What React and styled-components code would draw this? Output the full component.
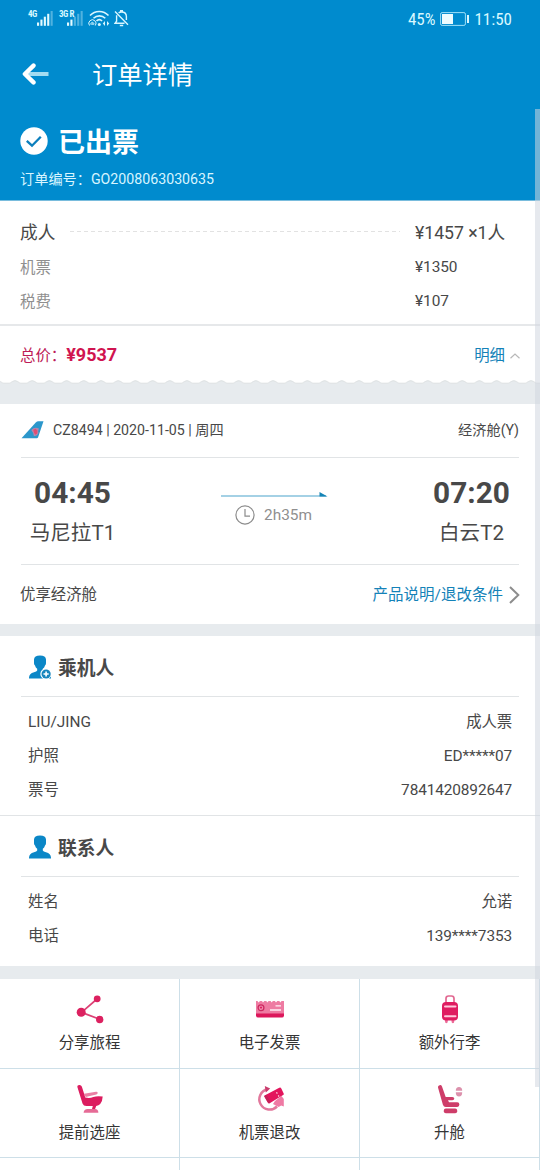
import React from 'react'
import styled, { createGlobalStyle } from 'styled-components'

const fare = [
    { label: '机票', value: '¥1350' },
    { label: '税费', value: '¥107' },
]

const passenger = [
    { label: 'LIU/JING', value: '成人票' },
    { label: '护照', value: 'ED*****07' },
    { label: '票号', value: '7841420892647' },
]

const contact = [
    { label: '姓名', value: '允诺' },
    { label: '电话', value: '139****7353' },
]

const SignalIcon = ({ bars }) => (
    <svg width="17" height="15" viewBox="0 0 17 15">
        {[0, 1, 2, 3, 4].map((i) => (
            <rect key={i} x={i * 3.4} y={11.5 - i * 2.9} width="2.1" height={3.3 + i * 2.9} fill="#e4fbff" opacity={i < bars ? 1 : 0.35} />
        ))}
    </svg>
)

const WifiIcon = () => (
    <svg width="22" height="17" viewBox="0 0 22 17" fill="none" stroke="#d8f6ff" strokeWidth="1.6">
        <path d="M2 5.5C7 .1 15.5.1 20.5 5.5" />
        <path d="M5.5 8.3C8.8 5 14 5 17.3 8.3" />
        <path d="M8.5 11c1.6-1.6 4-1.6 5.6 0" />
        <path d="M1.5 15.5a3.6 3.6 0 1 1 5.8 0" strokeWidth="1" />
        <path d="M3.2 14.8a1.5 1.5 0 1 1 2.4 0" strokeWidth="1" />
        <circle cx="4.4" cy="14" r=".8" fill="#d8f6ff" stroke="none" />
        <circle cx="11.3" cy="14.4" r="1.5" fill="#d8f6ff" stroke="none" />
        <path d="M17 11v5l-2.2-2.5zM19 11v5l2.2-2.5z" fill="#d8f6ff" stroke="none" />
    </svg>
)

const BellOffIcon = () => (
    <svg width="15" height="17" viewBox="0 0 15 17" fill="none" stroke="#d8f6ff" strokeWidth="1.4">
        <path d="M1 1.5l13 13.2M2.6 5.3v5.9L1 13.3h9.5M4.6 2.9C5.5 2.2 6.2 2 7.5 2c3 0 4.9 2 4.9 4.6V10" />
        <path d="M6.7 2V.6h1.6V2M5.8 15.5h3.4" />
    </svg>
)

const BatteryIcon = () => (
    <svg width="29" height="14" viewBox="0 0 29 14">
        <rect x=".6" y=".6" width="24.8" height="12.8" rx="1.5" fill="none" stroke="#9fe0f8" strokeWidth="1" />
        <rect x="2" y="2" width="11" height="10" fill="#edfcff" />
        <rect x="27" y="3" width="2" height="8" fill="#d8f6ff" />
    </svg>
)

const BackIcon = () => (
    <svg width="27" height="22" viewBox="0 0 27 22" fill="none">
        <path d="M5 11h21.5" stroke="#a3dcf1" strokeWidth="4" />
        <path d="M11.5 2.6L2.9 11l8.6 8.4" stroke="#fff" strokeWidth="4.4" strokeLinecap="round" strokeLinejoin="round" />
    </svg>
)

const CheckIcon = () => (
    <svg width="28" height="28" viewBox="0 0 28 28">
        <circle cx="14" cy="14" r="13.7" fill="#fff" />
        <path d="M6.8 13.8l5.2 4.9 8.8-9" fill="none" stroke="#0c7fbd" strokeWidth="2.3" />
    </svg>
)

const TailIcon = () => (
    <svg width="23" height="18" viewBox="0 0 23 18">
        <path d="M.5 17.2L14.8 1.5Q15.9.3 17.5.3h5L17 16.5q-.3.7-1.2.7z" fill="#2c97cb" />
        <path d="M10.3 9q3.3-3.6 7.6-1.4-1 2.1-.4 4.4-1.3 3.5-4.6 3-.3-3.1-2.6-6z" fill="#b585ad" />
        <path d="M12.2 8.7l2.2-1 2 1.7-.2 3.2-2.1 1.2-1.2-2.5z" fill="#e04d72" />
    </svg>
)

const RouteArrow = () => (
    <svg width="108" height="7" viewBox="0 0 108 7">
        <path d="M0 5h105" stroke="#4aa4cb" strokeWidth="1.1" />
        <path d="M98.5 1l8 4.5h-8z" fill="#1584b6" />
    </svg>
)

const ClockIcon = () => (
    <svg width="20" height="20" viewBox="0 0 20 20" fill="none" stroke="#8c8c8c" strokeWidth="1.2">
        <circle cx="10" cy="10" r="9.1" />
        <path d="M10 4v7.2h5" />
    </svg>
)

const ChevronUp = () => (
    <svg width="10" height="6" viewBox="0 0 10 6" fill="none" stroke="#b8b8b8" strokeWidth="1.2">
        <path d="M.5 5.2L5 1l4.5 4.2" />
    </svg>
)

const ChevronRight = () => (
    <svg width="11" height="18" viewBox="0 0 11 18" fill="none" stroke="#8d8d8d" strokeWidth="2">
        <path d="M1 1l8.3 8L1 17" />
    </svg>
)

const PersonIcon = ({ plus }) => (
    <svg width="22" height="24" viewBox="0 0 22 24">
        <path d="M5 4.4Q5.2.5 11 .5t6 3.9v3q.3 2-1 3-.6 2.2-2.2 3.3v1.9q.5 1 3.2 1.7 4.8 1.2 5 5.4v.9H0v-.9q.2-4.2 5-5.4 2.7-.7 3.2-1.7v-1.9Q6.6 12.600 6 10.400q-1.300-1-1-3z" fill="#0b87c7" />
        {plus && (
            <>
                <circle cx="16.9" cy="18.9" r="5.6" fill="#fff" />
                <circle cx="17.1" cy="19" r="4.6" fill="#1685bd" />
                <path d="M17.1 16.4v5.200M14.500 19h5.200" stroke="#fff" strokeWidth="1.6" />
            </>
        )}
    </svg>
)

const ShareIcon = () => (
    <svg width="30" height="30" viewBox="0 0 30 30" fill="#dc2160">
        <path d="M22 5L6.5 18.4 24 25" fill="none" stroke="#dc4275" strokeWidth="1.7" />
        <circle cx="22.2" cy="4.8" r="3.4" />
        <circle cx="6.2" cy="18.3" r="4.5" />
        <circle cx="24.7" cy="25.5" r="3.7" />
    </svg>
)

const InvoiceIcon = () => (
    <svg width="30" height="30" viewBox="0 0 30 30">
        <path d="M1 7h1.5l1 1.4L5 7h2l1 1.4L9.3 7h2l1 1.4L13.6 7h2l1 1.4L17.900 7h2L21 8.4 22.3 7h2l1 1.4L26.6 7H29v14H1z" fill="#ee7ba2" />
        <path d="M1 19.5h28v1.8q0 2.2-2 2.2H3q-2 0-2-2.2z" fill="#dc175b" />
        <circle cx="6" cy="13.800" r="2.9" fill="#f08eae" stroke="#cc285f" strokeWidth="1.3" />
        <path d="M4.6 12.700h2.8L6 15.200z" fill="#dc175b" />
        <path d="M20.500 11.9H26M15 16h11" stroke="#fff0f5" strokeWidth="1.3" />
    </svg>
)

const LuggageIcon = () => (
    <svg width="30" height="30" viewBox="0 0 30 30">
        <path d="M11 9V4.5Q11 2 13.5 2h3Q19 2 19 4.5V9" fill="none" stroke="#e26891" strokeWidth="1.7" />
        <path d="M10 26h2.800v1.200q0 2-1.400 2t-1.400-2zM16.500 26h2.800v1.200q0 2-1.400 2t-1.400-2z" fill="#ec6c99" />
        <rect x="7" y="8" width="16" height="18.5" rx="4" fill="#df1c60" />
        <path d="M10 12.5h10.5M10 22.3h10.5" stroke="#ffc9dc" strokeWidth="2" strokeLinecap="round" />
    </svg>
)

const SeatIcon = () => (
    <svg width="30" height="30" viewBox="0 0 30 30">
        <path d="M9 9.800l12-2q1.5-.2 1.7 1t-1.4 1.6L10.700 13z" fill="#ea7fa4" />
        <path d="M2.300 2.800Q2.200 1 4.200 1 6.200.8 6.900 2.800L10.300 13.600q4.500.9 8-.5 3.800-1.400 9.400-.500-.1 4.300-2.500 7.400-1.500 1.700-4 1.900l-1.300 3.600h-3l.9-3.600h-6.400q-2.900 0-3.900-2.500z" fill="#dc1c5f" />
        <path d="M8.600 28.800q.4-3.700 4-3.700h7.600q3 .1 3.200 3.700z" fill="#e66b96" />
    </svg>
)

const RefundIcon = () => (
    <svg width="30" height="30" viewBox="0 0 30 30">
        <path d="M20 17l6.500-5 2.300 3v7.500l-2.600-1-2.600 1.600L18 20z" fill="#ef7aa4" />
        <path d="M12.500 5.200A10.300 10.300 0 1 0 22 22.500" fill="none" stroke="#e2789c" strokeWidth="2.5" />
        <path d="M9.800 2l5.400 2.600-4.400 4z" fill="#c93d6d" />
        <path d="M9.600 11.500L24.300 3.800q1.300-.6 2 .7l2.400 4.900q.5 1-.6 1.700L14.700 19.300q-1.300.6-2-.7l-3.400-5.800q-.4-.9.300-1.300z" fill="#e3155d" />
        <path d="M21.500 8.300l.8 1.300M23.300 11.400l.7 1.200" stroke="#ffd2e1" strokeWidth="1.2" />
        <path d="M9.300 12l2.200-1.200 4 7.200-2.200 1z" fill="#c32258" />
    </svg>
)

const UpgradeIcon = () => (
    <svg width="30" height="30" viewBox="0 0 30 30">
        <path d="M3 3.600q-.3-2 1.6-2.400 1.7-.4 2.4 1.300L10.700 13h6.600q2 0 2 1.600t-2 1.700H13l1 2h8.200q2.200.1 2.200 2.200t-2.200 2.500H10.700q-2 0-2.800-2.200z" fill="#ce3d69" />
        <rect x="8.800" y="24.600" width="13.400" height="4.600" rx="2" fill="#ce3d69" />
        <path d="M20.800 6.800q0-3.700 3.200-3.700t3.200 3.700z" fill="#dc91ac" />
        <path d="M20.800 8.200h6.400q0 4.300-3.200 4.300t-3.200-4.300z" fill="#dc91ac" />
    </svg>
)

const services = [
    { name: '分享旅程', Icon: ShareIcon },
    { name: '电子发票', Icon: InvoiceIcon },
    { name: '额外行李', Icon: LuggageIcon },
    { name: '提前选座', Icon: SeatIcon },
    { name: '机票退改', Icon: RefundIcon },
    { name: '升舱', Icon: UpgradeIcon },
]

const InfoList = ({ items }) => (
    <List>
        {items.map((item) => (
            <InfoRow key={item.label}>
                <span>{item.label}</span>
                <InfoValue>{item.value}</InfoValue>
            </InfoRow>
        ))}
    </List>
)

export default function App() {
    return (
        <Page>
            <GlobalStyle />
            <Header>
                <StatusBar>
                    <StatusLeft>
                        <Network>4G</Network>
                        <SignalIcon bars={4} />
                        <Network $second>3G R</Network>
                        <SignalIcon bars={2} />
                        <WifiIcon />
                        <BellOffIcon />
                    </StatusLeft>
                    <StatusRight>
                        <span>45%</span>
                        <BatteryIcon />
                        <span>11:50</span>
                    </StatusRight>
                </StatusBar>
                <TitleBar>
                    <BackIcon />
                    <Title>订单详情</Title>
                </TitleBar>
                <State>
                    <CheckIcon />
                    <StateText>已出票</StateText>
                </State>
                <OrderNo>订单编号：GO2008063030635</OrderNo>
            </Header>

            <PriceCard>
                <FareRow $main>
                    <FareHead>成人</FareHead>
                    <Dashes />
                    <FareValue>¥1457 ×1人</FareValue>
                </FareRow>
                {fare.map((item) => (
                    <FareRow key={item.label}>
                        <FareLabel>{item.label}</FareLabel>
                        <FareValue>{item.value}</FareValue>
                    </FareRow>
                ))}
            </PriceCard>
            <TotalRow>
                <TotalLabel>总价：<Amount>¥9537</Amount></TotalLabel>
                <Detail>明细<ChevronUp /></Detail>
            </TotalRow>
            <Gap $height={24}>
                <svg width="540" height="4" viewBox="0 0 540 4">
                    <defs>
                        <pattern id="scallop" x="6.4" width="17.2" height="4" patternUnits="userSpaceOnUse">
                            <path d="M0 3.200h3Q4.600 2.900 5.800 1.600q2.800-2 5.600 0 1.200 1.300 2.800 1.600h3V4H0z" fill="#e7ebee" />
                            <path d="M0 3.200h3Q4.600 2.900 5.800 1.600q2.800-2 5.600 0 1.200 1.300 2.800 1.600h3" fill="none" stroke="#dcdfe1" strokeWidth=".9" />
                        </pattern>
                    </defs>
                    <rect width="540" height="4" fill="#fff" />
                    <rect width="540" height="4" fill="url(#scallop)" />
                </svg>
            </Gap>

            <Flight>
                <FlightHead>
                    <TailIcon />
                    <FlightNo>CZ8494 | 2020-11-05 | 周四</FlightNo>
                    <span>经济舱(Y)</span>
                </FlightHead>
                <Journey>
                    <Stop>
                        <Time>04:45</Time>
                        <Airport>马尼拉T1</Airport>
                    </Stop>
                    <Route>
                        <RouteArrow />
                        <Duration><ClockIcon />2h35m</Duration>
                    </Route>
                    <Stop>
                        <Time>07:20</Time>
                        <Airport>白云T2</Airport>
                    </Stop>
                </Journey>
                <Product>
                    <span>优享经济舱</span>
                    <Rules>产品说明/退改条件<ChevronRight /></Rules>
                </Product>
            </Flight>
            <Gap $height={12} />

            <Section $divided>
                <SectionTitle><PersonIcon plus />乘机人</SectionTitle>
                <InfoList items={passenger} />
            </Section>
            <Section>
                <SectionTitle><PersonIcon />联系人</SectionTitle>
                <InfoList items={contact} />
            </Section>
            <Gap $height={13} />

            <Services>
                {services.map(({ name, Icon }) => (
                    <Service key={name}>
                        <Icon />
                        <span>{name}</span>
                    </Service>
                ))}
                <Service />
                <Service />
                <Service />
            </Services>
            <Scrollbar />
        </Page>
    )
}

const GlobalStyle = createGlobalStyle`
    * {
        box-sizing: border-box;
    }
    body {
        margin: 0;
        overflow: hidden;
    }
    svg {
        display: block;
        flex-shrink: 0;
    }
`;
const Page = styled.div`
    position: relative;
    width: 540px;
    height: 1170px;
    overflow: hidden;
    background: #fff;
    color: #484848;
    font-family: Roboto, "Noto Sans CJK SC", sans-serif;
    font-size: 15.4px;
    line-height: 20px;
`;
const Header = styled.header`
    height: 201px;
    background: #008bce;
    border-bottom: 1px solid #79bcdd;
    color: #fff;
`;
const StatusBar = styled.div`
    display: flex;
    justify-content: space-between;
    height: 38px;
    padding: 9px 28px 0;
    color: #d8f8ff;
`;
const StatusLeft = styled.div`
    display: flex;
    align-items: center;
    height: 18px;
    svg:nth-of-type(n + 3) {
        margin-left: 4px;
    }
`;
const Network = styled.span`
    align-self: flex-start;
    width: ${props => props.$second ? '8px' : '9px'};
    margin-left: ${props => props.$second ? '5px' : '0'};
    font-family: "Roboto Condensed", Roboto, sans-serif;
    font-size: 9px;
    font-weight: 700;
    line-height: 11px;
    letter-spacing: -0.5px;
    white-space: nowrap;
`;
const StatusRight = styled.div`
    display: flex;
    align-items: center;
    gap: 5px;
    height: 20px;
    font-family: "Roboto Condensed", Roboto, sans-serif;
    font-size: 17px;
`;
const TitleBar = styled.div`
    display: flex;
    align-items: center;
    height: 72px;
    padding: 0 0 1px 22px;
`;
const Title = styled.h1`
    margin: 4px 0 0 43px;
    font-size: 25.3px;
    font-weight: 400;
    line-height: 36px;
`;
const State = styled.div`
    display: flex;
    align-items: center;
    gap: 10px;
    height: 62px;
    padding: 0 0 1px 20px;
`;
const StateText = styled.h2`
    margin: 5px 0 0;
    font-size: 27px;
    line-height: 36px;
`;
const OrderNo = styled.div`
    padding-left: 20px;
    margin-top: -3px;
    font-size: 14.2px;
    color: #d8f5ff;
`;
const PriceCard = styled.section`
    height: 125px;
    padding: 14px 21px 0;
    border-bottom: 2px solid #e6e8ea;
`;
const FareRow = styled.div`
    display: flex;
    align-items: center;
    justify-content: space-between;
    height: ${props => props.$main ? '35px' : '34px'};
    font-size: ${props => props.$main ? '17.7px' : '15.4px'};
`;
const FareHead = styled.span`
    width: 50px;
    margin-left: -1px;
`;
const Dashes = styled.i`
    width: 330px;
    height: 1px;
    margin: -3px auto 0 0;
    background: repeating-linear-gradient(90deg, #e2e2e2 0 4px, transparent 4px 7px);
`;
const FareLabel = styled.span`
    margin: 2px 0 0 -1px;
    color: #8f8f8f;
`;
const FareValue = styled.span`
    width: 104px;
    letter-spacing: -0.05px;
    white-space: nowrap;
`;
const TotalRow = styled.div`
    display: flex;
    align-items: center;
    justify-content: space-between;
    height: 54px;
    padding: 4px 20px 0 20px;
`;
const TotalLabel = styled.span`
    padding-top: 1px;
    color: #bd1b57;
`;
const Amount = styled.b`
    font-size: 18px;
    color: #d01450;
`;
const Detail = styled.span`
    display: flex;
    align-items: center;
    gap: 5px;
    padding-top: 2px;
    color: #1482b8;
`;
const Gap = styled.div`
    height: ${props => props.$height}px;
    background: #e7ebee;
`;
const Flight = styled.section`
    height: 220px;
    padding: 0 21px 0 21px;
`;
const FlightHead = styled.div`
    display: flex;
    align-items: center;
    height: 54px;
    padding-bottom: 2px;
    border-bottom: 1px solid #e1e4e6;
    font-size: 14.2px;
`;
const FlightNo = styled.span`
    flex: 1;
    margin-left: 9px;
`;
const Journey = styled.div`
    display: flex;
    justify-content: space-between;
    height: 107px;
    padding: 16px 5px 0 9px;
    border-bottom: 1px solid #e1e4e6;
`;
const Stop = styled.div`
    display: flex;
    flex-direction: column;
    align-items: center;
    width: 85px;
`;
const Time = styled.b`
    font-size: 29.8px;
    line-height: 37px;
`;
const Airport = styled.span`
    margin-top: 6px;
    font-size: 20.6px;
    line-height: 32px;
    white-space: nowrap;
`;
const Route = styled.div`
    padding: 17px 0 0 6px;
`;
const Duration = styled.div`
    display: flex;
    align-items: center;
    gap: 9px;
    margin: 7px 0 0 14px;
    color: #8f8f8f;
`;
const Product = styled.div`
    display: flex;
    align-items: center;
    justify-content: space-between;
    height: 58px;
    padding-top: 2px;
    margin: 0 -1px;
`;
const Rules = styled.span`
    display: flex;
    align-items: center;
    gap: 6px;
    font-size: 15.5px;
    color: #1482b8;
`;
const Section = styled.section`
    height: ${props => props.$divided ? '180px' : '150px'};
    padding: 0 21px;
    border-bottom: ${props => props.$divided ? '1px solid #e1e4e6' : 'none'};
`;
const SectionTitle = styled.h3`
    display: flex;
    align-items: center;
    gap: 7px;
    height: 61px;
    margin: 0;
    padding: 5px 0 0 8px;
    border-bottom: 1px solid #e1e4e6;
    font-size: 18.8px;
    svg {
        margin-top: -4px;
    }
`;
const List = styled.div`
    padding: 8px 7px 0;
`;
const InfoRow = styled.div`
    display: flex;
    align-items: center;
    justify-content: space-between;
    height: 34px;
`;
const InfoValue = styled.span`
    letter-spacing: -0.12px;
`;
const Services = styled.div`
    display: grid;
    grid-template-columns: repeat(3, 180px);
    grid-template-rows: 90px 89px 89px;
`;
const Service = styled.div`
    display: flex;
    flex-direction: column;
    align-items: center;
    gap: 9px;
    padding-top: 15px;
    border-right: 1px solid #cddfe8;
    border-bottom: 1px solid #cddfe8;
    color: #353535;
`;
const Scrollbar = styled.div`
    position: absolute;
    top: 109px;
    right: 0;
    width: 5px;
    height: 978px;
    background: rgba(209, 215, 224, 0.54);
`;
